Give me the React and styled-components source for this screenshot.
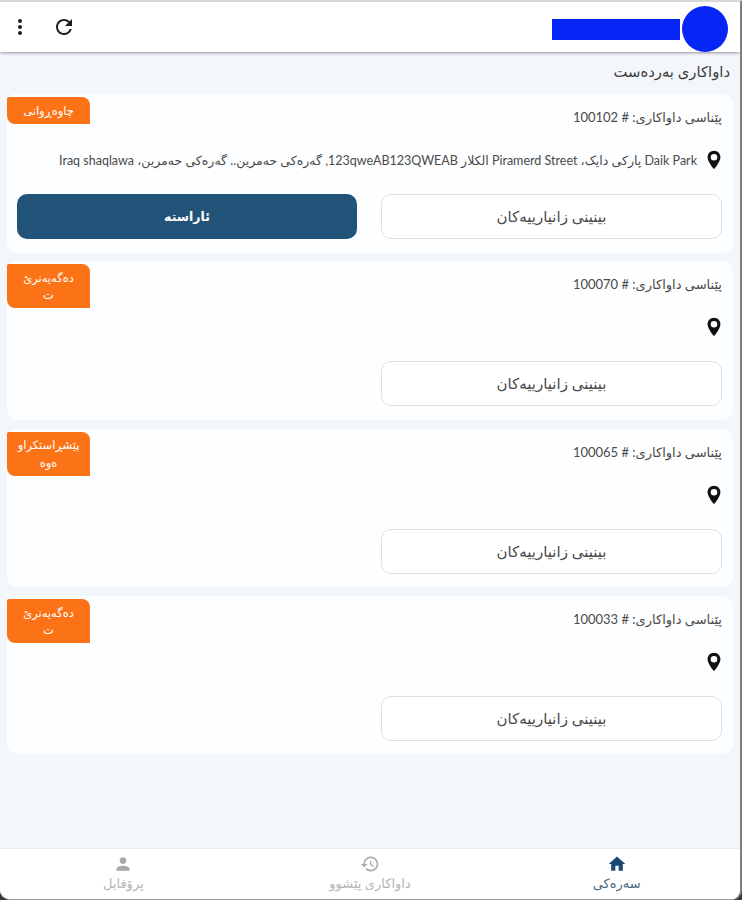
import styled, { createGlobalStyle } from "styled-components"
import { MdMoreVert, MdRefresh, MdHome, MdHistory, MdPerson } from "react-icons/md"

const requests = [
  {
    id: "100102",
    status: "چاوەڕوانی",
    address: "Daik Park پارکی دایک، Piramerd Street الکلار 123qweAB123QWEAB, گەرەکی حەمرین.. گەرەکی حەمرین، Iraq shaqlawa",
    primary: "ئاراستە",
  },
  { id: "100070", status: "دەگەیەنرێ\nت", address: "" },
  { id: "100065", status: "پێشڕاستکراو\nەوە", address: "" },
  { id: "100033", status: "دەگەیەنرێ\nت", address: "" },
]

const Pin = () => (
  <PinSvg viewBox="0 0 24 24" width="22" height="22">
    <path
      fillRule="evenodd"
      d="M12 2C8.1 2 5 5.1 5 9c0 5.2 7 13 7 13s7-7.8 7-13c0-3.9-3.1-7-7-7zm0 10.6a3.6 3.6 0 1 1 0-7.2 3.6 3.6 0 0 1 0 7.2z"
    />
  </PinSvg>
)

const App = () => {
  return (
    <Shell dir="rtl">
      <GlobalStyle />
      <AppBar>
        <Brand>
          <Avatar />
          <BrandName />
        </Brand>
        <BarActions>
          <BarIcon><MdRefresh size={24} /></BarIcon>
          <BarIcon><MdMoreVert size={24} /></BarIcon>
        </BarActions>
      </AppBar>

      <Content>
        <Title>داواکاری بەردەست</Title>
        <CardList>
          {requests.map((req) => (
            <Card key={req.id}>
              <Badge>{req.status}</Badge>
              <RequestId>پێناسی داواکاری: # {req.id}</RequestId>
              <AddressRow>
                <Pin />
                <Address>{req.address}</Address>
              </AddressRow>
              <Actions>
                <OutlineButton>بینینی زانیارییەکان</OutlineButton>
                {req.primary && <PrimaryButton>{req.primary}</PrimaryButton>}
              </Actions>
            </Card>
          ))}
        </CardList>
      </Content>

      <BottomNav>
        <NavItem $active>
          <MdHome size={20} />
          <span>سەرەکی</span>
        </NavItem>
        <NavItem>
          <MdHistory size={20} />
          <span>داواکاری پێشوو</span>
        </NavItem>
        <NavItem>
          <MdPerson size={20} />
          <span>پرۆفایل</span>
        </NavItem>
      </BottomNav>
    </Shell>
  )
}

export default App

const GlobalStyle = createGlobalStyle`
  html, body {
    margin: 0;
    padding: 0;
    background: #3a3a3a;
  }
  * {
    box-sizing: border-box;
  }
  body {
    font-family: "Lato", "DejaVu Sans", sans-serif;
  }
`

const Shell = styled.div`
  width: 742px;
  height: 900px;
  display: flex;
  flex-direction: column;
  background: #f3f6fb;
  border-top: 2px solid #d8d8d8;
  border-right: 2px solid #808080;
  border-bottom: 1px solid #a0a0a0;
  border-radius: 0 0 10px 10px;
  overflow: hidden;
`

const AppBar = styled.header`
  height: 50px;
  flex-shrink: 0;
  display: flex;
  align-items: center;
  justify-content: space-between;
  padding: 0 12px 0 8px;
  background: #ffffff;
  box-shadow: 0 1px 3px rgba(0, 0, 0, 0.4);
  z-index: 1;
`

const Brand = styled.div`
  display: flex;
  align-items: center;
  gap: 2px;
  margin-top: 4px;
`

const Avatar = styled.div`
  width: 46px;
  height: 46px;
  border-radius: 50%;
  background: #0626f5;
`

const BrandName = styled.div`
  width: 128px;
  height: 21px;
  background: #0626f5;
`

const BarActions = styled.div`
  display: flex;
  align-items: center;
  gap: 20px;
`

const BarIcon = styled.span`
  display: flex;
  color: #1f1f1f;
`

const Content = styled.main`
  flex: 1;
  padding: 9px 7px 0;
`

const Title = styled.h1`
  margin: 0 3px 12px 0;
  height: 21px;
  font-size: 14.8px;
  line-height: 21px;
  font-weight: 400;
  color: #3c3c3c;
`

const CardList = styled.div`
  display: flex;
  flex-direction: column;
  gap: 8.7px;
`

const Card = styled.section`
  position: relative;
  height: 158.6px;
  padding: 14px 11px 0 11px;
  background: #fdfeff;
  border-radius: 10px;
`

const Badge = styled.div`
  position: absolute;
  top: 3.2px;
  left: 0;
  width: 83px;
  padding: 4.5px 4px;
  background: #fb7316;
  border-radius: 2px 8px 0 8px;
  color: #ffffff;
  font-size: 11.5px;
  line-height: 17.5px;
  text-align: center;
  white-space: pre-line;
`

const RequestId = styled.div`
  height: 18px;
  font-size: 13px;
  line-height: 18px;
  color: #4a4a4a;
`

const AddressRow = styled.div`
  display: flex;
  align-items: center;
  gap: 6px;
  height: 24px;
  margin-top: 22px;
`

const PinSvg = styled.svg`
  flex-shrink: 0;
  margin-right: -3px;
  fill: #111111;
`

const Address = styled.span`
  font-size: 12.5px;
  color: #4a4a4a;
  white-space: nowrap;
`

const Actions = styled.div`
  display: grid;
  grid-template-columns: 341px 340px;
  column-gap: 24px;
  margin-top: 22px;
`

const OutlineButton = styled.button`
  height: 45px;
  border: 1px solid #dcdfe3;
  border-radius: 10px;
  background: #ffffff;
  color: #4a4a4a;
  font-family: inherit;
  font-size: 15px;
`

const PrimaryButton = styled.button`
  height: 45px;
  border: none;
  border-radius: 10px;
  background: #215478;
  color: #ffffff;
  font-family: inherit;
  font-size: 12.5px;
  font-weight: 700;
`

const BottomNav = styled.nav`
  height: 51px;
  flex-shrink: 0;
  display: grid;
  grid-template-columns: repeat(3, 1fr);
  padding-bottom: 2px;
  background: #ffffff;
  border-top: 1px solid #e9ecef;
`

const NavItem = styled.div`
  display: flex;
  flex-direction: column;
  align-items: center;
  justify-content: center;
  gap: 1px;
  color: ${(props) => (props.$active ? "#1a4a73" : "#a8a8a8")};
  font-size: 13px;
  line-height: 17px;

  span {
    color: ${(props) => (props.$active ? "#4a6a85" : "#b4b4b4")};
  }
`
